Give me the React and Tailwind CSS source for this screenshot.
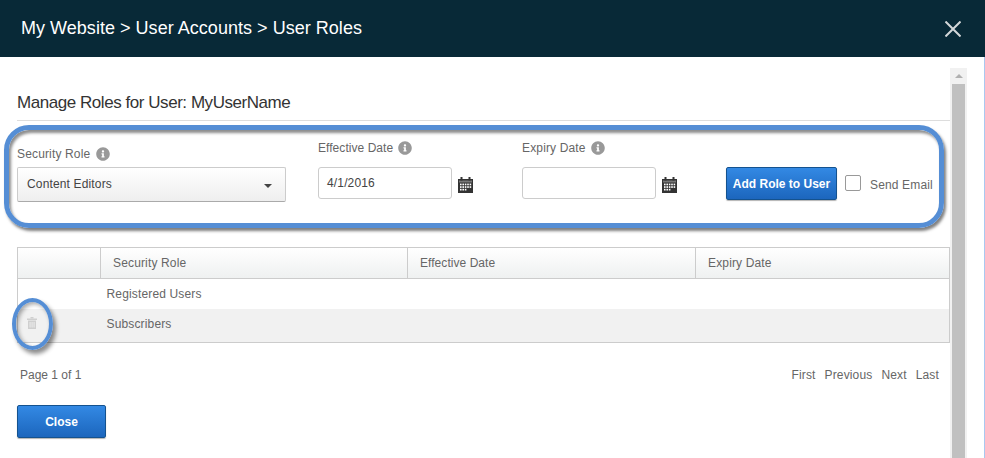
import { FaInfoCircle } from 'react-icons/fa';

function Info() {
  return <FaInfoCircle className="w-[14px] h-[14px] text-[#999999]" />;
}

function CalendarIcon() {
  const cells = [];
  for (let r = 0; r < 3; r++) {
    for (let c = 0; c < 5; c++) {
      if (r === 2 && c > 2) continue;
      cells.push(<rect key={`${r}-${c}`} x={2 + c * 2.4} y={6.6 + r * 2.6} width="1.6" height="1.7" fill="#fff" />);
    }
  }
  return (
    <svg width="15" height="16" viewBox="0 0 15 16" className="shrink-0">
      <rect x="0" y="2" width="15" height="14" fill="#333" />
      <rect x="1" y="3.5" width="13" height="2" fill="#777" />
      <rect x="2.5" y="0" width="2" height="3.5" fill="#333" />
      <rect x="10.5" y="0" width="2" height="3.5" fill="#333" />
      {cells}
    </svg>
  );
}

function TrashIcon() {
  return (
    <svg width="10" height="12" viewBox="0 0 10 12" fill="#cfcfcf" className="block">
      <rect x="3.5" y="0" width="3" height="1.5" />
      <rect x="0" y="1.5" width="10" height="1.5" />
      <path d="M1 3.5h8V12H1zM2.6 5v5.5h.9V5zm2 0v5.5h.9V5zm2 0v5.5h.9V5z" fillRule="evenodd" />
    </svg>
  );
}

function BlueButton({ children, className }) {
  return (
    <button className={`rounded-[2px] border border-[#14528f] bg-gradient-to-b from-[#3389e4] to-[#1c66bd] text-white font-bold text-[12px] tracking-normal shadow-[0_1px_1px_rgba(0,0,0,0.3)] ${className}`}>
      {children}
    </button>
  );
}

export default function App() {
  return (
    <div className="w-[985px] h-[458px] overflow-hidden bg-white font-['Liberation_Sans',Arial,sans-serif] text-[12px] tracking-[0.15px] text-[#666666]">
      <header className="h-[57px] bg-[#082937] flex items-center justify-between pl-[21px] pr-[24px]">
        <h1 className="text-[18px] tracking-[0.03px] text-white">My Website &gt; User Accounts &gt; User Roles</h1>
        <svg width="16" height="16" viewBox="0 0 16 16" stroke="#d3d7d9" strokeWidth="2">
          <path d="M0.5 0.5 15.5 15.5M15.5 0.5 0.5 15.5" />
        </svg>
      </header>

      <div className="flex h-[401px] border-r border-[#a9c8f0] pr-[17px]">
        <main className="relative w-[950px] pl-[17px] pt-[36px]">
          <h2 className="text-[17px] leading-[20px] text-[#333333] tracking-[-0.45px] pb-[7px] border-b border-[#dddddd]">
            Manage Roles for User: MyUserName
          </h2>

          <div className="flex mt-[19px] h-[62px]">
            <div className="w-[269px]">
              <div className="flex items-center gap-[6px] h-[14px] mt-[7px] mb-[6px]">
                <span>Security Role</span>
                <Info />
              </div>
              <div className="h-[35px] flex items-center justify-between pl-[9px] pr-[13px] pb-[2px] rounded-[2px] border border-[#cccccc] border-b-[#aaaaaa] bg-gradient-to-b from-white to-[#eeeeee] text-[#444444]">
                <span>Content Editors</span>
                <span className="w-0 h-0 border-x-[4px] border-x-transparent border-t-[4px] border-t-[#444444] mt-[4px]" />
              </div>
            </div>

            <div className="ml-[32px] w-[204px]">
              <div className="flex items-center gap-[5px] h-[14px] mt-[1px] mb-[12px] tracking-[0.05px]">
                <span>Effective Date</span>
                <Info />
              </div>
              <div className="flex items-start gap-[6px]">
                <div className="w-[134px] h-[32px] pl-[8px] flex items-center rounded-[3px] border border-[#cccccc] text-[#444444]">4/1/2016</div>
                <div className="mt-[10px]"><CalendarIcon /></div>
              </div>
            </div>

            <div className="w-[204px]">
              <div className="flex items-center gap-[5px] h-[14px] mt-[1px] mb-[12px]">
                <span>Expiry Date</span>
                <Info />
              </div>
              <div className="flex items-start gap-[6px]">
                <div className="w-[134px] h-[32px] rounded-[3px] border border-[#cccccc]" />
                <div className="mt-[10px]"><CalendarIcon /></div>
              </div>
            </div>

            <div className="flex items-start pt-[27px]">
              <BlueButton className="w-[111px] h-[33px]">Add Role to User</BlueButton>
              <div className="w-[16px] h-[16px] ml-[8px] mt-[8px] rounded-[2px] border border-[#999999]" />
              <span className="ml-[9px] mt-[9px]">Send Email</span>
            </div>
          </div>

          <table className="mt-[45px] w-[933px] table-fixed border-collapse">
            <thead>
              <tr className="h-[31px] bg-gradient-to-b from-white to-[#eef0f0]">
                <th className="w-[83px] border border-[#cccccc]" />
                <th className="w-[307px] border border-[#cccccc] text-left font-normal pl-[12px]">Security Role</th>
                <th className="w-[288px] border border-[#cccccc] text-left font-normal pl-[12px] tracking-[0.05px]">Effective Date</th>
                <th className="border border-[#cccccc] text-left font-normal pl-[12px]">Expiry Date</th>
              </tr>
            </thead>
            <tbody className="border-x border-b border-[#cccccc]">
              <tr className="h-[30px]">
                <td />
                <td className="pl-[6px]">Registered Users</td>
                <td />
                <td />
              </tr>
              <tr className="h-[34px] bg-[#f1f1f1]">
                <td className="pl-[9px] pb-[4px]"><TrashIcon /></td>
                <td className="pl-[6px] pb-[3px]">Subscribers</td>
                <td />
                <td />
              </tr>
            </tbody>
          </table>

          <div className="flex justify-between mt-[25px] pl-[3px] pr-[11px] leading-[14px]">
            <span className="tracking-normal">Page 1 of 1</span>
            <div className="flex gap-[9px]">
              <span>First</span>
              <span>Previous</span>
              <span>Next</span>
              <span>Last</span>
            </div>
          </div>

          <BlueButton className="block mt-[23px] w-[89px] h-[33px]">Close</BlueButton>

          {/* annotations drawn over the form */}
          <div className="absolute left-[4px] top-[68px] w-[940px] h-[103px] rounded-[25px] border-[5px] border-[#558ed5] shadow-[2px_3px_3px_rgba(0,0,0,0.5),inset_2px_3px_3px_rgba(0,0,0,0.45)] pointer-events-none" />
          <div className="absolute left-[12px] top-[241px] w-[41px] h-[52px] rounded-[50%] border-[4px] border-[#558ed5] shadow-[3px_4px_4px_rgba(0,0,0,0.45),inset_2px_2px_4px_rgba(0,0,0,0.35)] pointer-events-none" />
        </main>

        <aside className="w-[17px] mt-[11px] bg-[#f1f1f1] flex flex-col items-center">
          <div className="h-[16px] flex items-center">
            <span className="w-0 h-0 border-x-[4px] border-x-transparent border-b-[4px] border-b-[#b0b0b0]" />
          </div>
          <div className="flex-1 w-[13px] bg-[#c0c0c0]" />
        </aside>
      </div>
    </div>
  );
}
